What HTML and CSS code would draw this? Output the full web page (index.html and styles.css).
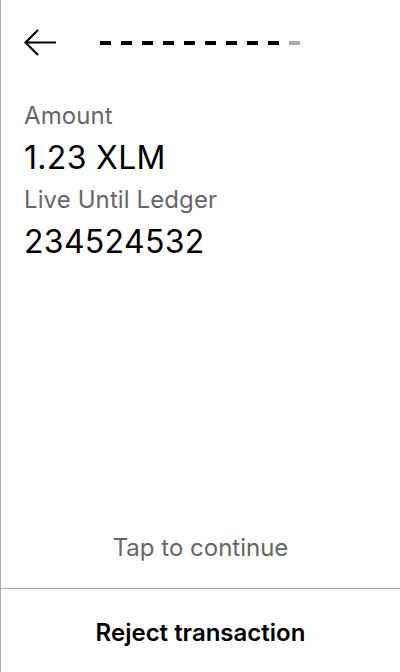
FILE: index.html
```html
<!DOCTYPE html>
<html>
<head>
<meta charset="utf-8">
<link rel="stylesheet" href="styles.css">
</head>
<body>
<div class="screen">
  <div class="header">
    <svg class="back" width="34" height="28" viewBox="0 0 34 28">
      <path d="M14 1 L1.5 13.5 L14 26 M1.5 13.5 H32" fill="none" stroke="#000" stroke-width="2.2"/>
    </svg>
    <div class="progress">
      <span class="dash"></span><span class="dash"></span><span class="dash"></span><span class="dash"></span><span class="dash"></span><span class="dash"></span><span class="dash"></span><span class="dash"></span><span class="dash"></span><span class="dash dim"></span>
    </div>
  </div>
  <div class="content">
    <div class="label">Amount</div>
    <div class="value">1.23 XLM</div>
    <div class="label">Live Until Ledger</div>
    <div class="value">234524532</div>
  </div>
  <div class="tap">Tap to continue</div>
  <div class="footer">Reject transaction</div>
</div>
</body>
</html>
```

FILE: styles.css
```css
html, body {
  margin: 0;
  padding: 0;
  background: #fff;
}
.screen {
  box-sizing: border-box;
  width: 400px;
  height: 672px;
  border-left: 1px solid #aaa;
  display: flex;
  flex-direction: column;
  font-family: Inter, "Noto Sans", sans-serif;
  color: #000;
}
.header {
  display: flex;
  align-items: center;
  padding: 29px 0 0 23px;
  height: 28px;
}
.back {
  display: block;
}
.progress {
  display: flex;
  gap: 10px;
  margin-left: 42px;
}
.dash {
  width: 11px;
  height: 4px;
  background: #000;
}
.dash.dim {
  background: #aaa;
}
.content {
  padding: 41px 0 0 23px;
  flex: 1;
}
.label {
  font-size: 24px;
  line-height: 36px;
  color: #666;
  letter-spacing: 0.1px;
}
.value {
  font-size: 32px;
  line-height: 48px;
  color: #000;
  letter-spacing: 0.3px;
}
.tap {
  text-align: center;
  font-size: 24px;
  line-height: 36px;
  color: #666;
  padding-bottom: 22px;
}
.footer {
  box-sizing: border-box;
  border-top: 1px solid #aaa;
  height: 84px;
  padding-top: 3px;
  display: flex;
  align-items: center;
  justify-content: center;
  font-size: 24px;
  font-weight: 600;
}
```
